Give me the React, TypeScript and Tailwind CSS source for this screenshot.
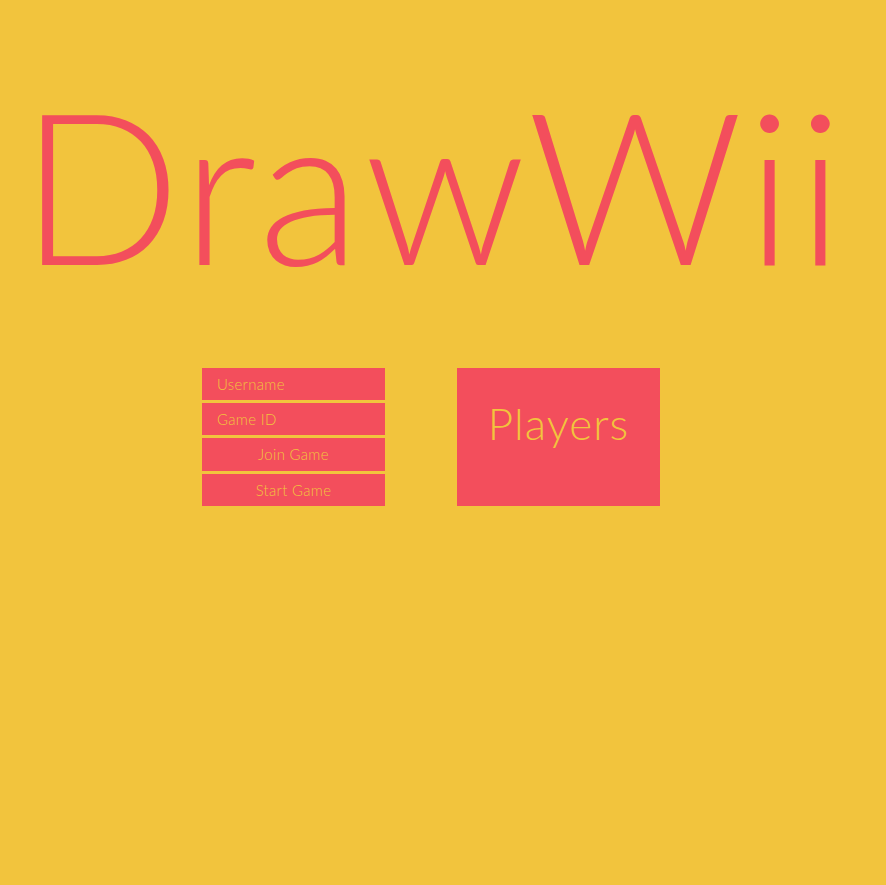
export default function App() {
  return (
    <main className="min-h-[885px] w-full bg-[#f2c43d] font-['Lato',sans-serif] text-[#f34e5c]">
      {/* title */}
      <header className="pt-[77px] pl-[20px]">
        <h1 className="text-[212px] leading-[1] font-light tracking-[3.5px] whitespace-nowrap">DrawWii</h1>
      </header>

      {/* form + players */}
      <section className="mt-[79px] flex pl-[202px] gap-[72px]">
        <div className="w-[183px] flex flex-col gap-[3px]">
          <input
            placeholder="Username"
            className="h-[32px] bg-[#f34e5c] px-[15px] text-[15px] tracking-[0.3px] font-light text-[#f2c43d] placeholder:text-[#f2c43d] outline-none"
          />
          <input
            placeholder="Game ID"
            className="h-[32px] bg-[#f34e5c] px-[15px] text-[15px] tracking-[0.3px] font-light text-[#f2c43d] placeholder:text-[#f2c43d] outline-none"
          />
          <button className="h-[33px] bg-[#f34e5c] text-[15px] tracking-[0.3px] font-light text-[#f2c43d]">Join Game</button>
          <button className="h-[32px] bg-[#f34e5c] text-[15px] tracking-[0.3px] font-light text-[#f2c43d]">Start Game</button>
        </div>

        <div className="w-[203px] h-[138px] bg-[#f34e5c] flex justify-center pt-[33px]">
          <span className="text-[44px] font-light leading-none tracking-[1px] text-[#f2c43d]">Players</span>
        </div>
      </section>
    </main>
  );
}
